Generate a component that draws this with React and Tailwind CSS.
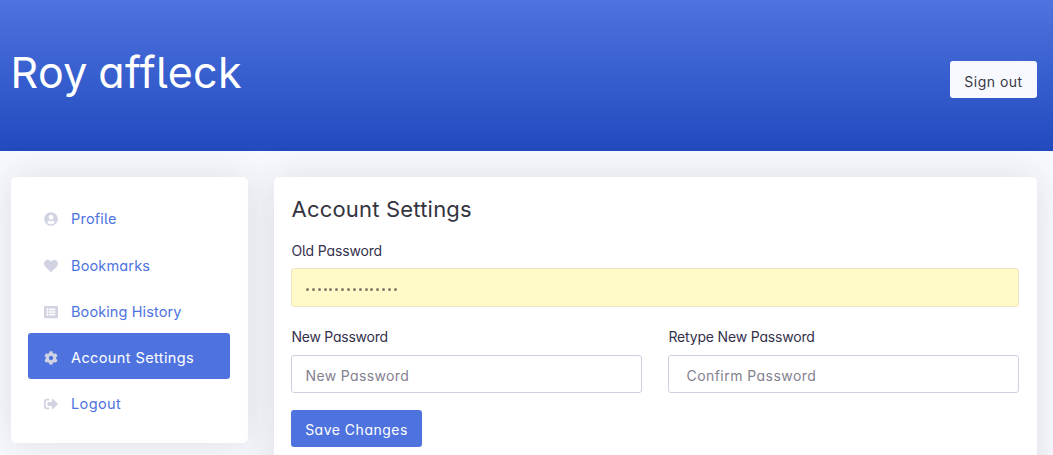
import { FaUserCircle, FaHeart, FaListAlt, FaCog, FaSignOutAlt } from "react-icons/fa";

const links = [
  { label: "Profile", Icon: FaUserCircle, row: "h-[46px]", text: "tracking-[0.2px]" },
  { label: "Bookmarks", Icon: FaHeart, row: "h-[47px] pt-px", text: "tracking-[0.16px]" },
  { label: "Booking History", Icon: FaListAlt, row: "h-[46px]", text: "tracking-[0.1px]" },
  { label: "Account Settings", Icon: FaCog, row: "h-[46px]", text: "tracking-[0.4px]", active: true },
  { label: "Logout", Icon: FaSignOutAlt, row: "h-[46px]", text: "tracking-[0.4px]" },
];

const inputClass =
  "block h-[38px] w-full rounded-[3px] border border-[#d0cfe2] bg-white pt-[3px] text-[14px] leading-[20px] text-[#7d7a8d] outline-none placeholder:text-[#84818f] placeholder:opacity-100";
const labelClass = "block pl-[0.5px] text-[14px] leading-[18px] text-[#34314c]";

export default function App() {
  return (
    <div className="h-[455px] overflow-hidden bg-[#f8f9fe] font-['Inter','Liberation_Sans',sans-serif] [font-feature-settings:'cv11','cv05']">
      <header className="flex h-[151px] items-start justify-between bg-linear-to-b from-[#4e73df] to-[#224abe] pr-4 pl-[10.5px]">
        <h1 className="mt-[44px] text-[43px] leading-[56px] font-normal tracking-[0.4px] whitespace-nowrap text-white [word-spacing:-2px]">Roy affleck</h1>
        <button className="mt-[61px] h-[37px] w-[87px] rounded-[3px] bg-[#f8f9fe] pt-1 text-[14px] tracking-[0.5px] whitespace-nowrap text-[#3a3946]">Sign out</button>
      </header>

      <main className="flex items-start gap-[26px] pt-[26px] pr-4 pl-[11px]">
        <nav className="h-[266px] w-[237px] shrink-0 rounded-[5px] bg-white pt-[17px] pr-[18px] pl-[17px] shadow-[0_0_36px_rgba(40,40,50,0.13)]">
          {links.map(({ label, Icon, row, text, active }) => (
            <a
              key={label}
              href="#"
              className={`flex items-center rounded-[3px] pl-4 text-[14.5px] whitespace-nowrap ${row} ${text} ${active ? "bg-[#4e73df] text-white" : "text-[#4e73df]"}`}
            >
              <Icon className="mt-[3px] mr-[13px] size-[14px] shrink-0 text-[#d1d3e2]" />
              <span className="mt-1">{label}</span>
            </a>
          ))}
        </nav>

        <section className="h-[320px] flex-1 rounded-[5px] bg-white pt-[16px] pr-[18px] pl-[17px] shadow-[0_0_36px_rgba(40,40,50,0.13)]">
          <h2 className="h-[49px] pl-[0.5px] text-[22px] leading-[32px] tracking-[0.2px] text-[#34343f]">Account Settings</h2>
          <label className="block">
            <span className={`${labelClass} h-[26px] tracking-[-0.15px]`}>Old Password</span>
            <span className="flex h-[39px] items-center gap-[2.87px] rounded-[3px] border border-[#f0e4c4] bg-[#fffac8] pt-[3px] pl-[14px]">
              {Array.from({ length: 16 }, (_, i) => (
                <i key={i} className="size-[3px] rounded-full bg-[#857b6b]" />
              ))}
            </span>
          </label>
          <div className="mt-[21px] grid grid-cols-2 gap-[26px]">
            <label>
              <span className={`${labelClass} h-[27px] tracking-[-0.25px]`}>New Password</span>
              <input className={`${inputClass} pl-[13.5px] tracking-[0.36px]`} placeholder="New Password" />
            </label>
            <label>
              <span className={`${labelClass} h-[27px] tracking-[-0.18px]`}>Retype New Password</span>
              <input className={`${inputClass} pl-[17.5px] tracking-[0.45px]`} placeholder="Confirm Password" />
            </label>
          </div>
          <button className="mt-[17px] block h-[37px] w-[131px] rounded-[3px] bg-[#4e73df] pt-[2px] text-[14px] tracking-[0.5px] whitespace-nowrap text-white">Save Changes</button>
        </section>
      </main>
    </div>
  );
}
